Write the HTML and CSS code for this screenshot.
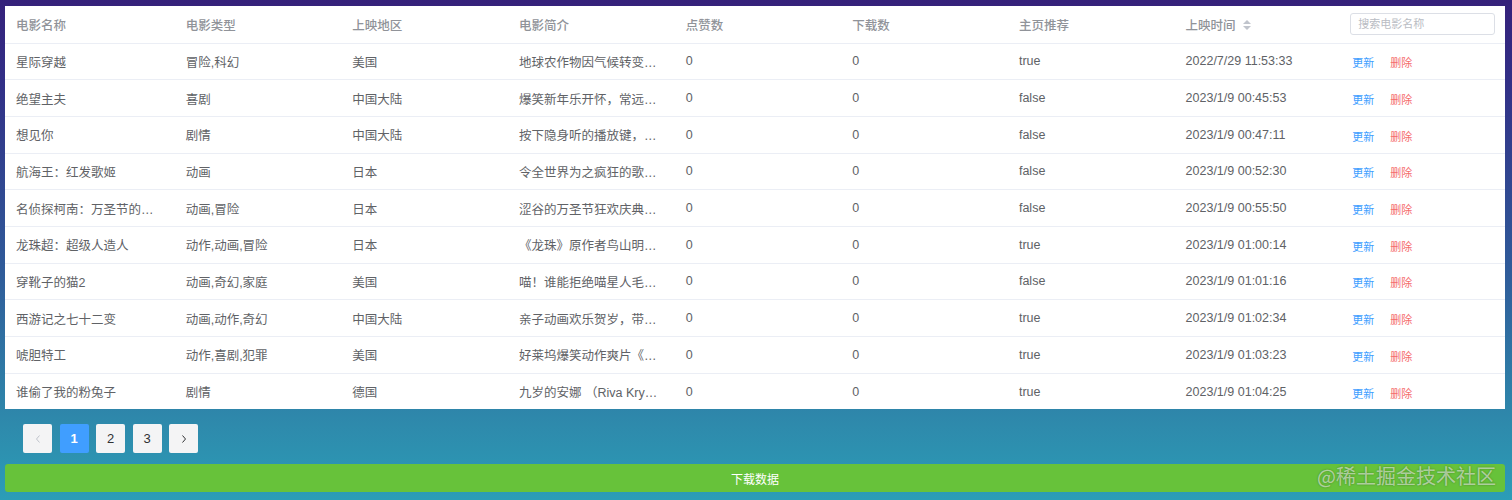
FILE: index.html
```html
<!DOCTYPE html>
<html lang="zh">
<head>
<meta charset="utf-8">
<title>电影列表</title>
<link rel="stylesheet" href="styles.css">
</head>
<body>
<div class="page">
  <div class="table-wrap">
    <table class="movie-table">
      <colgroup>
        <col><col><col><col><col><col><col><col><col>
      </colgroup>
      <thead>
        <tr>
          <th>电影名称</th>
          <th>电影类型</th>
          <th>上映地区</th>
          <th>电影简介</th>
          <th>点赞数</th>
          <th>下载数</th>
          <th>主页推荐</th>
          <th>上映时间<span class="sort"><i class="up"></i><i class="down"></i></span></th>
          <th class="search-cell"><input class="search" type="text" placeholder="搜索电影名称"></th>
        </tr>
      </thead>
      <tbody>
        <tr><td>星际穿越</td><td>冒险,科幻</td><td>美国</td><td class="ell">地球农作物因气候转变而大量枯萎</td><td>0</td><td>0</td><td>true</td><td>2022/7/29 11:53:33</td><td class="ops"><a class="upd">更新</a><a class="del">删除</a></td></tr>
        <tr><td>绝望主夫</td><td>喜剧</td><td>中国大陆</td><td class="ell">爆笑新年乐开怀，常远和李嘉琦</td><td>0</td><td>0</td><td>false</td><td>2023/1/9 00:45:53</td><td class="ops"><a class="upd">更新</a><a class="del">删除</a></td></tr>
        <tr><td>想见你</td><td>剧情</td><td>中国大陆</td><td class="ell">按下隐身听的播放键，穿越时空</td><td>0</td><td>0</td><td>false</td><td>2023/1/9 00:47:11</td><td class="ops"><a class="upd">更新</a><a class="del">删除</a></td></tr>
        <tr><td>航海王：红发歌姬</td><td>动画</td><td>日本</td><td class="ell">令全世界为之疯狂的歌姬乌塔</td><td>0</td><td>0</td><td>false</td><td>2023/1/9 00:52:30</td><td class="ops"><a class="upd">更新</a><a class="del">删除</a></td></tr>
        <tr><td class="ell">名侦探柯南：万圣节的新娘</td><td>动画,冒险</td><td>日本</td><td class="ell">涩谷的万圣节狂欢庆典上人潮涌动</td><td>0</td><td>0</td><td>false</td><td>2023/1/9 00:55:50</td><td class="ops"><a class="upd">更新</a><a class="del">删除</a></td></tr>
        <tr><td>龙珠超：超级人造人</td><td>动作,动画,冒险</td><td>日本</td><td class="ell">《龙珠》原作者鸟山明亲自操刀</td><td>0</td><td>0</td><td>true</td><td>2023/1/9 01:00:14</td><td class="ops"><a class="upd">更新</a><a class="del">删除</a></td></tr>
        <tr><td>穿靴子的猫2</td><td>动画,奇幻,家庭</td><td>美国</td><td class="ell">喵！谁能拒绝喵星人毛茸茸的魅力</td><td>0</td><td>0</td><td>false</td><td>2023/1/9 01:01:16</td><td class="ops"><a class="upd">更新</a><a class="del">删除</a></td></tr>
        <tr><td>西游记之七十二变</td><td>动画,动作,奇幻</td><td>中国大陆</td><td class="ell">亲子动画欢乐贺岁，带你重温经典</td><td>0</td><td>0</td><td>true</td><td>2023/1/9 01:02:34</td><td class="ops"><a class="upd">更新</a><a class="del">删除</a></td></tr>
        <tr><td>唬胆特工</td><td>动作,喜剧,犯罪</td><td>美国</td><td class="ell">好莱坞爆笑动作爽片《唬胆特工》</td><td>0</td><td>0</td><td>true</td><td>2023/1/9 01:03:23</td><td class="ops"><a class="upd">更新</a><a class="del">删除</a></td></tr>
        <tr><td>谁偷了我的粉兔子</td><td>剧情</td><td>德国</td><td class="ell">九岁的安娜 （Riva Krymalowski 饰）</td><td>0</td><td>0</td><td>true</td><td>2023/1/9 01:04:25</td><td class="ops"><a class="upd">更新</a><a class="del">删除</a></td></tr>
      </tbody>
    </table>
  </div>
  <div class="pager">
    <button class="pg arrow disabled"><svg width="8" height="10" viewBox="0 0 8 10"><path d="M5.5 1.5 L2.5 5 L5.5 8.5" fill="none" stroke="currentColor" stroke-width="1"/></svg></button>
    <button class="pg active">1</button>
    <button class="pg">2</button>
    <button class="pg">3</button>
    <button class="pg arrow"><svg width="8" height="10" viewBox="0 0 8 10"><path d="M2.5 1.5 L5.5 5 L2.5 8.5" fill="none" stroke="currentColor" stroke-width="1"/></svg></button>
  </div>
  <button class="download">下载数据</button>
  <div class="watermark">@稀土掘金技术社区</div>
</div>
</body>
</html>
```
FILE: styles.css
```css
html, body {
  margin: 0;
  padding: 0;
}
body {
  width: 1512px;
  height: 500px;
  overflow: hidden;
  background: linear-gradient(180deg, #35217a 0%, #322e86 15%, #2f5c9a 55%, #2e8aac 85%, #2b9db7 100%);
  font-family: "Liberation Sans", "Noto Sans CJK SC", Arial, sans-serif;
}
.page {
  position: relative;
  padding: 6px 7px 0 5px;
  height: 494px;
}
.table-wrap {
  background: #fff;
}
.movie-table {
  width: 1500px;
  table-layout: fixed;
  border-collapse: collapse;
  font-size: 12.5px;
  color: #606266;
}
.movie-table th,
.movie-table td {
  text-align: left;
  padding: 0 11px 0 14px;
  border-bottom: 1px solid #ebeef5;
  white-space: nowrap;
  overflow: hidden;
}
.movie-table th:first-child,
.movie-table td:first-child {
  padding-left: 11px;
}
.movie-table th {
  height: 36.5px;
  color: #909399;
  font-weight: 500;
}
.movie-table tbody td {
  height: 35.7px;
}
.movie-table tbody tr:last-child td {
  border-bottom: none;
}
.movie-table td.ell {
  text-overflow: ellipsis;
}
.sort {
  display: inline-flex;
  flex-direction: column;
  gap: 2px;
  margin-left: 7px;
  vertical-align: middle;
  position: relative;
  top: -1px;
}
.sort i {
  display: block;
  width: 0;
  height: 0;
  border-left: 4px solid transparent;
  border-right: 4px solid transparent;
}
.sort .up {
  border-bottom: 4px solid #c0c4cc;
}
.sort .down {
  border-top: 4px solid #c0c4cc;
}
.movie-table th.search-cell {
  padding-left: 12px;
  padding-right: 8px;
}
.search {
  box-sizing: border-box;
  width: 145px;
  height: 22px;
  border: 1px solid #dcdfe6;
  border-radius: 3px;
  padding: 0 7px;
  font-size: 11px;
  font-family: "Liberation Sans", "Noto Sans CJK SC", sans-serif;
  color: #606266;
  outline: none;
}
.search::placeholder {
  color: #b9bcc3;
}
.ops a {
  font-size: 11px;
  margin-right: 16px;
  cursor: pointer;
  position: relative;
  top: 1px;
}
.ops a.upd {
  color: #409eff;
}
.ops a.del {
  color: #f56c6c;
}
.pager {
  display: flex;
  gap: 7.5px;
  padding: 15px 0 0 18px;
}
.pg {
  width: 29px;
  height: 29px;
  border: none;
  border-radius: 2px;
  background: #f4f4f5;
  color: #303133;
  font-family: "Liberation Sans", sans-serif;
  font-size: 13px;
  font-weight: 400;
  padding: 0;
  display: flex;
  align-items: center;
  justify-content: center;
}
.pg.active {
  background: #409eff;
  color: #fff;
  font-weight: 700;
}
.pg.arrow {
  color: #303133;
}
.pg.disabled {
  color: #c0c4cc;
}
.download {
  display: block;
  margin-top: 11px;
  width: 1500px;
  height: 28px;
  border: none;
  border-radius: 3px;
  background: #67c23a;
  color: #fff;
  font-family: "Liberation Sans", "Noto Sans CJK SC", sans-serif;
  font-size: 12px;
}
.watermark {
  position: absolute;
  right: 16px;
  top: 461px;
  font-family: "Noto Sans CJK SC", sans-serif;
  font-size: 20px;
  color: rgba(255, 255, 255, 0.55);
  text-shadow: 0 0 2px rgba(0, 0, 0, 0.35);
}
```
